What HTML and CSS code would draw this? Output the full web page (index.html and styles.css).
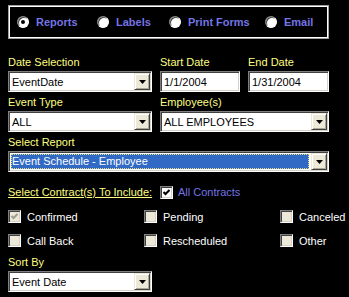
FILE: index.html
```html
<!DOCTYPE html>
<html>
<head>
    <title>Reports</title>
    <link rel="stylesheet" href="styles.css">
</head>
<body>
    <div class="panel">
        <div class="mode-frame">
            <label class="mode"><span class="radio on"></span>Reports</label>
            <label class="mode"><span class="radio"></span>Labels</label>
            <label class="mode"><span class="radio"></span>Print Forms</label>
            <label class="mode"><span class="radio"></span>Email</label>
        </div>

        <div class="fields">
            <div class="field">
                <div class="caption">Date Selection</div>
                <div class="combo"><span class="combo-text">EventDate</span><span class="combo-btn"><svg width="7" height="4"><polygon points="0,0 7,0 3.5,4" fill="#000"/></svg></span></div>
            </div>
            <div class="field">
                <div class="caption">Start Date</div>
                <div class="textbox">1/1/2004</div>
            </div>
            <div class="field">
                <div class="caption">End Date</div>
                <div class="textbox">1/31/2004</div>
            </div>

            <div class="field">
                <div class="caption">Event Type</div>
                <div class="combo"><span class="combo-text">ALL</span><span class="combo-btn"><svg width="7" height="4"><polygon points="0,0 7,0 3.5,4" fill="#000"/></svg></span></div>
            </div>
            <div class="field span-2">
                <div class="caption">Employee(s)</div>
                <div class="combo"><span class="combo-text">ALL EMPLOYEES</span><span class="combo-btn"><svg width="7" height="4"><polygon points="0,0 7,0 3.5,4" fill="#000"/></svg></span></div>
            </div>

            <div class="field span-3">
                <div class="caption">Select Report</div>
                <div class="combo"><span class="combo-text selected">Event Schedule - Employee</span><span class="combo-btn"><svg width="7" height="4"><polygon points="0,0 7,0 3.5,4" fill="#000"/></svg></span></div>
            </div>
        </div>

        <div class="contracts">
            <span class="contracts-label">Select Contract(s) To Include:</span>
            <span class="check white"><svg width="7" height="7"><path d="M0.5 3 L2.5 5 L6.5 1" stroke="#000" stroke-width="2" fill="none"/></svg></span>
            <span class="all-contracts">All Contracts</span>
        </div>

        <div class="statuses">
            <div class="status"><span class="check"><svg width="7" height="7"><path d="M0.5 3 L2.5 5 L6.5 1" stroke="#a09e94" stroke-width="2" fill="none"/></svg></span>Confirmed</div>
            <div class="status"><span class="check"></span>Pending</div>
            <div class="status"><span class="check"></span>Canceled</div>
            <div class="status"><span class="check"></span>Call Back</div>
            <div class="status"><span class="check"></span>Rescheduled</div>
            <div class="status"><span class="check"></span>Other</div>
        </div>

        <div class="field sort">
            <div class="caption">Sort By</div>
            <div class="combo"><span class="combo-text">Event Date</span><span class="combo-btn"><svg width="7" height="4"><polygon points="0,0 7,0 3.5,4" fill="#000"/></svg></span></div>
        </div>
    </div>
</body>
</html>
```

FILE: styles.css
```css
body {
    margin: 0;
    background-color: #000;
    font-family: "Liberation Sans", Arial, sans-serif;
    font-size: 11px;
}

.panel {
    width: 321px;
    padding: 5px 8px 0;
}

.mode-frame {
    height: 34px;
    box-sizing: border-box;
    border: 1px solid #a0a0a0;
    box-shadow: inset 0 0 0 1px #fff;
    display: grid;
    grid-template-columns: 80px 72px 96px 1fr;
    align-items: center;
    padding-left: 8px;
}

.mode {
    display: flex;
    align-items: center;
    gap: 7px;
    color: #7474e6;
    font-weight: bold;
}

.radio {
    width: 12px;
    height: 12px;
    box-sizing: border-box;
    border-radius: 50%;
    background-color: #fff;
    border: 1px solid;
    border-color: #808080 #fff #fff #808080;
    box-shadow: inset 1px 1px 0 #404040;
    display: flex;
    align-items: center;
    justify-content: center;
}

.radio.on::after {
    content: "";
    width: 4px;
    height: 4px;
    border-radius: 50%;
    background-color: #000;
}

.fields {
    display: grid;
    grid-template-columns: 144px 80px 81px;
    column-gap: 8px;
    row-gap: 2px;
    margin-top: 15px;
}

.span-2 {
    grid-column: span 2;
}

.span-3 {
    grid-column: span 3;
}

.caption {
    height: 17px;
    line-height: 17px;
    color: #ffff80;
}

.combo,
.textbox {
    height: 21px;
    box-sizing: border-box;
    background-color: #fff;
    border: 1px solid;
    border-color: #808080 #fff #fff #808080;
    box-shadow: inset 1px 1px 0 #404040, inset -1px -1px 0 #d4d0c8;
    display: flex;
    align-items: center;
    color: #000;
}

.textbox {
    padding-left: 3px;
}

.combo-text {
    flex: 1;
    padding-left: 3px;
    white-space: nowrap;
}

.combo-text.selected {
    margin: 0 2px 0 2px;
    padding-left: 1px;
    height: 15px;
    line-height: 15px;
    background-color: #316ac5;
    color: #fff;
    outline: 1px dotted #e0e080;
    outline-offset: -1px;
}

.combo-btn {
    width: 16px;
    height: 17px;
    box-sizing: border-box;
    margin-right: 1px;
    background-color: #ece9d8;
    border: 1px solid;
    border-color: #ece9d8 #404040 #404040 #ece9d8;
    box-shadow: inset 1px 1px 0 #fff, inset -1px -1px 0 #aca899;
    display: flex;
    align-items: center;
    justify-content: center;
}

.combo-btn svg {
    display: block;
}

.contracts {
    display: flex;
    align-items: center;
    height: 16px;
    margin-top: 12px;
}

.contracts-label {
    width: 152px;
    color: #ffff80;
    text-decoration: underline;
}

.check {
    width: 13px;
    height: 13px;
    box-sizing: border-box;
    flex: none;
    background-color: #ece9d8;
    border: 1px solid;
    border-color: #808080 #fff #fff #808080;
    box-shadow: inset 1px 1px 0 #404040, inset -1px -1px 0 #d4d0c8;
    display: flex;
    align-items: center;
    justify-content: center;
}

.check.white {
    background-color: #fff;
}

.check svg {
    display: block;
}

.all-contracts {
    margin-left: 5px;
    color: #7474e6;
}

.statuses {
    display: grid;
    grid-template-columns: 136px 136px 1fr;
    row-gap: 11px;
    margin-top: 10px;
}

.status {
    display: flex;
    align-items: center;
    gap: 6px;
    height: 13px;
    color: #fff;
}

.sort {
    width: 144px;
    margin-top: 7px;
}
```
